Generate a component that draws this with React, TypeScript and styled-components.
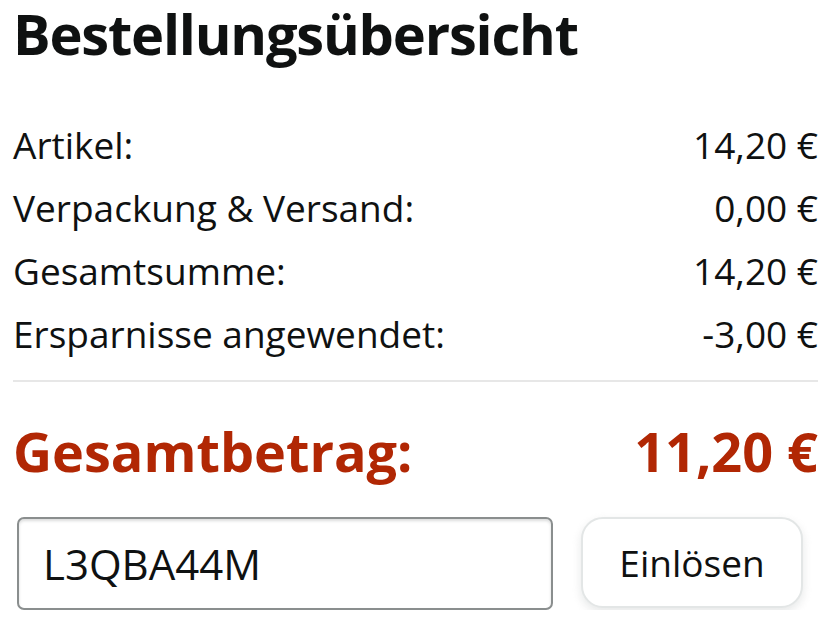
import styled, { createGlobalStyle } from 'styled-components';

const GlobalStyle = createGlobalStyle`
  html, body {
    margin: 0;
    padding: 0;
    background: #fff;
  }
  body {
    font-family: "Open Sans", "Noto Sans", Arial, sans-serif;
    color: #0f1111;
  }
`;

const Panel = styled.div`
  width: 838px;
  padding: 0 20px 0 13px;
  box-sizing: border-box;
`;

const Heading = styled.h1`
  margin: 0;
  font-size: 56px;
  line-height: 66px;
  font-weight: 700;
  letter-spacing: -1.2px;
  color: #0f1111;
`;

const Lines = styled.div`
  margin-top: 47px;
  display: flex;
  flex-direction: column;
`;

const Line = styled.div`
  display: flex;
  justify-content: space-between;
  font-size: 37px;
  line-height: 63px;
  color: #0f1111;
`;

const Divider = styled.hr`
  margin: 15px 0 0;
  border: none;
  height: 2px;
  background: #e7e7e7;
`;

const TotalLine = styled.div`
  margin-top: 34px;
  display: flex;
  justify-content: space-between;
  font-size: 54px;
  line-height: 70px;
  font-weight: 700;
  color: #b12704;
`;

const PromoRow = styled.div`
  margin-top: 31px;
  padding-left: 4px;
  display: flex;
  align-items: flex-start;
  gap: 28px;
`;

const CodeInput = styled.input`
  width: 536px;
  height: 93px;
  box-sizing: border-box;
  padding: 0 24px;
  border: 2px solid #8a8e8e;
  border-radius: 7px;
  box-shadow: inset 0 2px 3px rgba(15, 17, 17, 0.15);
  font-family: inherit;
  font-size: 42px;
  color: #0f1111;
  outline: none;
`;

const RedeemButton = styled.button`
  width: 222px;
  height: 91px;
  box-sizing: border-box;
  padding: 0;
  border: 2px solid #e3e6e6;
  border-radius: 22px;
  background: #fff;
  box-shadow: 0 4px 10px rgba(213, 217, 217, 0.6);
  font-family: inherit;
  font-size: 37px;
  color: #0f1111;
  cursor: pointer;
`;

const rows = [
  { label: 'Artikel:', value: '14,20 €' },
  { label: 'Verpackung & Versand:', value: '0,00 €' },
  { label: 'Gesamtsumme:', value: '14,20 €' },
  { label: 'Ersparnisse angewendet:', value: '-3,00 €' },
];

export default function App() {
  return (
    <>
      <GlobalStyle />
      <Panel>
        <Heading>Bestellungsübersicht</Heading>
        <Lines>
          {rows.map(r => (
            <Line key={r.label}>
              <span>{r.label}</span>
              <span>{r.value}</span>
            </Line>
          ))}
        </Lines>
        <Divider />
        <TotalLine>
          <span>Gesamtbetrag:</span>
          <span>11,20 €</span>
        </TotalLine>
        <PromoRow>
          <CodeInput defaultValue="L3QBA44M" />
          <RedeemButton>Einlösen</RedeemButton>
        </PromoRow>
      </Panel>
    </>
  );
}
